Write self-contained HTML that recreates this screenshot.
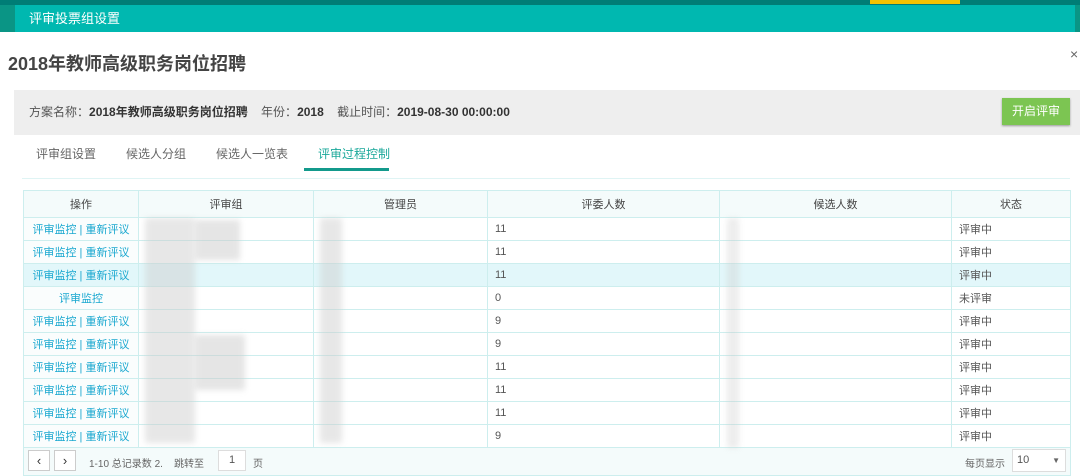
<!DOCTYPE html><html><head><meta charset="utf-8"><style>
*{margin:0;padding:0;box-sizing:border-box}
body{width:1080px;height:476px;overflow:hidden;background:#fff;font-family:"Liberation Sans","Noto Sans CJK SC",sans-serif;position:relative;color:#555}
.a{position:absolute}
table{border-collapse:collapse;position:absolute;left:23px;top:190px;font-size:11px;table-layout:fixed}
td,th{border:1px solid #cdeeee;height:23px;padding:0 7px;text-align:left;color:#555;font-weight:normal}
th{height:27px;background:#f4fbfb;text-align:center;color:#444}
td.op{text-align:center;color:#1aa8d0;background:#fafdfd}
tr.hl td{background:#e2f7fa}
.bl{position:absolute;background:#ccc;filter:blur(3px);opacity:.7}
</style></head><body>
<div class="a" style="left:0;top:0;width:1080px;height:5px;background:#007d76"></div>
<div class="a" style="left:870px;top:0;width:90px;height:4px;background:#f2c200"></div>
<div class="a" style="left:0;top:5px;width:15px;height:27px;background:#0a9585"></div>
<div class="a" style="left:15px;top:5px;width:1060px;height:27px;background:#00b8b0;color:#fff;font-size:13px;line-height:27px;padding-left:14px">评审投票组设置</div>
<div class="a" style="left:1075px;top:5px;width:5px;height:27px;background:#0a9585"></div>
<div class="a" style="left:8px;top:50px;font-size:18px;font-weight:bold;color:#444">2018年教师高级职务岗位招聘</div>
<div class="a" style="left:1070px;top:46px;font-size:14px;color:#666">×</div>
<div class="a" style="left:14px;top:90px;width:1066px;height:45px;background:#eee;font-size:12px;line-height:45px;padding-left:15px;color:#555">方案名称：<b style="color:#333">2018年教师高级职务岗位招聘</b>&nbsp;&nbsp;&nbsp;&nbsp;年份：<b style="color:#333">2018</b>&nbsp;&nbsp;&nbsp;&nbsp;截止时间：<b style="color:#333">2019-08-30 00:00:00</b></div>
<div class="a" style="left:1002px;top:98px;width:68px;height:27px;background:#7cc552;color:#fff;font-size:12px;line-height:27px;text-align:center;box-shadow:0 1px 2px #999">开启评审</div>
<div class="a" style="top:145px;left:36px;font-size:12px;color:#666">评审组设置</div>
<div class="a" style="top:145px;left:126px;font-size:12px;color:#666">候选人分组</div>
<div class="a" style="top:145px;left:216px;font-size:12px;color:#666">候选人一览表</div>
<div class="a" style="top:145px;left:318px;font-size:12px;color:#1aa89a">评审过程控制</div>
<div class="a" style="left:304px;top:168px;width:85px;height:3px;background:#139a8c"></div>
<div class="a" style="left:22px;top:178px;width:1048px;height:1px;background:#dff4f4"></div>
<table>
<colgroup><col style="width:115px"><col style="width:175px"><col style="width:174px"><col style="width:232px"><col style="width:232px"><col style="width:119px"></colgroup>
<tr><th>操作</th><th>评审组</th><th>管理员</th><th>评委人数</th><th>候选人数</th><th>状态</th></tr>
<tr><td class="op">评审监控 | 重新评议</td><td></td><td></td><td>11</td><td></td><td>评审中</td></tr>
<tr><td class="op">评审监控 | 重新评议</td><td></td><td></td><td>11</td><td></td><td>评审中</td></tr>
<tr class="hl"><td class="op">评审监控 | 重新评议</td><td></td><td></td><td>11</td><td></td><td>评审中</td></tr>
<tr><td class="op">评审监控</td><td></td><td></td><td>0</td><td></td><td>未评审</td></tr>
<tr><td class="op">评审监控 | 重新评议</td><td></td><td></td><td>9</td><td></td><td>评审中</td></tr>
<tr><td class="op">评审监控 | 重新评议</td><td></td><td></td><td>9</td><td></td><td>评审中</td></tr>
<tr><td class="op">评审监控 | 重新评议</td><td></td><td></td><td>11</td><td></td><td>评审中</td></tr>
<tr><td class="op">评审监控 | 重新评议</td><td></td><td></td><td>11</td><td></td><td>评审中</td></tr>
<tr><td class="op">评审监控 | 重新评议</td><td></td><td></td><td>11</td><td></td><td>评审中</td></tr>
<tr><td class="op">评审监控 | 重新评议</td><td></td><td></td><td>9</td><td></td><td>评审中</td></tr>
<tr><td colspan="6" style="height:28px;background:#f4fbfb"></td></tr>
</table>
<div class="bl" style="left:145px;top:218px;width:50px;height:225px;opacity:.45"></div>
<div class="bl" style="left:195px;top:220px;width:45px;height:40px;opacity:.5"></div>
<div class="bl" style="left:195px;top:335px;width:50px;height:55px;opacity:.5"></div>
<div class="bl" style="left:320px;top:218px;width:22px;height:225px;opacity:.45"></div>
<div class="bl" style="left:727px;top:218px;width:12px;height:230px;opacity:.35"></div>
<div class="a" style="left:28px;top:450px;width:22px;height:21px;border:1px solid #ccc;background:#fff;font-size:13px;text-align:center;line-height:19px;color:#333">&lsaquo;</div>
<div class="a" style="left:54px;top:450px;width:22px;height:21px;border:1px solid #ccc;background:#fff;font-size:13px;text-align:center;line-height:19px;color:#333">&rsaquo;</div>
<div class="a" style="left:89px;top:455px;font-size:10px;color:#666">1-10 总记录数 2.&nbsp;&nbsp;&nbsp;&nbsp;跳转至</div>
<div class="a" style="left:218px;top:450px;width:28px;height:21px;border:1px solid #ddd;background:#fff;font-size:11px;text-align:center;line-height:19px">1</div>
<div class="a" style="left:253px;top:455px;font-size:10px;color:#666">页</div>
<div class="a" style="left:965px;top:455px;font-size:10px;color:#666">每页显示</div>
<div class="a" style="left:1012px;top:449px;width:54px;height:23px;border:1px solid #ddd;background:#fff;font-size:11px;line-height:21px;padding-left:4px">10<span style="position:absolute;right:5px;font-size:8px;color:#666">▼</span></div>
</body></html>
